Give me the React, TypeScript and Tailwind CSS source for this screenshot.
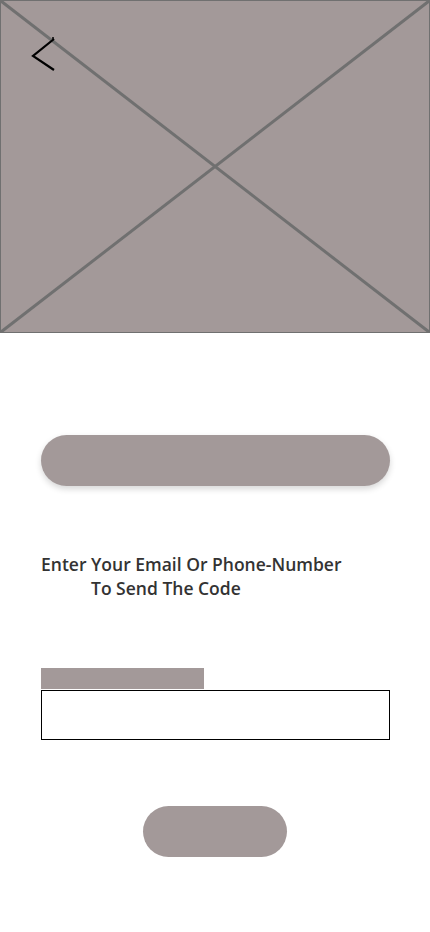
export default function App() {
  return (
    <div className="w-[430px] min-h-[932px] bg-white" style={{ fontFamily: '"Open Sans", "Noto Sans", sans-serif' }}>
      {/* Hero image placeholder */}
      <div className="relative h-[333px] w-full border border-[#707070] bg-[#a39999]">
        <svg className="absolute inset-0 h-full w-full" viewBox="0 0 428 331" preserveAspectRatio="none">
          <line x1="0" y1="0" x2="428" y2="331" stroke="#707070" strokeWidth="3" />
          <line x1="428" y1="0" x2="0" y2="331" stroke="#707070" strokeWidth="3" />
        </svg>
        <svg className="absolute left-[28px] top-[34px]" width="30" height="40" viewBox="0 0 30 40">
          <polyline points="25,4 4,21 25,35" fill="none" stroke="#000" strokeWidth="2.2" />
          <circle cx="24" cy="3" r="1" fill="#000" />
        </svg>
      </div>

      <div className="px-[41px]">
        <div className="mt-[102px] h-[51px] w-[349px] rounded-full bg-[#a39999] shadow-[0_3px_6px_rgba(0,0,0,0.16)]" />

        <p className="mt-[66px] text-[17.5px] font-semibold leading-[24px] text-[#333333]">
          Enter Your Email Or Phone-Number
          <br />
          <span className="pl-[50px]">To Send The Code</span>
        </p>

        <div className="mt-[68px] h-[21px] w-[163px] bg-[#a39999]" />
        <div className="mt-px h-[50px] w-[349px] border border-black bg-white" />

        <div className="mt-[66px] flex justify-center">
          <div className="h-[51px] w-[144px] rounded-full bg-[#a39999]" />
        </div>
      </div>
    </div>
  );
}
